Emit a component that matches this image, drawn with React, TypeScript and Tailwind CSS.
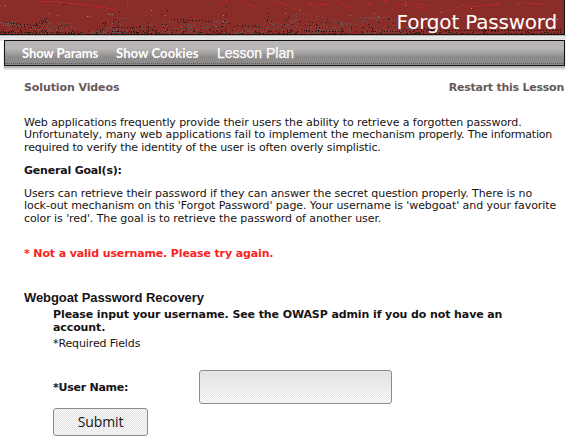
import React from 'react';

// Top edge of the cracked texture, as [x, y] points across the banner.
const ridge = [
  [0, 21], [30, 23], [46, 17], [52, 21], [70, 22], [80, 31], [96, 30], [106, 20], [118, 17], [122, 27], [145, 25],
  [149, 22], [158, 29], [164, 21], [190, 20], [214, 21], [226, 17], [236, 25], [260, 25], [268, 19], [284, 24],
  [292, 15], [304, 17], [330, 19], [350, 23], [362, 16], [376, 17], [390, 17], [402, 25], [440, 28], [565, 28],
];

function ridgeAt(x: number) {
  for (let i = 1; i < ridge.length; i += 1) {
    const [x1, y1] = ridge[i];
    const [x0, y0] = ridge[i - 1];
    if (x <= x1) return y0 + ((y1 - y0) * (x - x0)) / (x1 - x0);
  }
  return 29;
}

function noise(x: number, y: number) {
  const n = Math.sin(x * 12.9898 + y * 78.233) * 43758.5453;
  return n - Math.floor(n);
}

// Speckled pixels sit on every other column and row below the ridge.
let grayPath = '';
let darkPath = '';
for (let y = 14; y < 34; y += 1) {
  for (let x = y % 2; x < 565; x += 2) {
    const depth = y - ridgeAt(x);
    if (depth < 0) continue;
    const clump = Math.sin(x / 11 + y / 3) * 0.15;
    const n = noise(x, y);
    if (n < 0.2 + clump && x < 440) grayPath += `M${x} ${y}h1v1h-1z`;
    else if (n > 0.94 - (y > 29 ? 0.16 : 0) + clump * 0.4) darkPath += `M${x} ${y}h1v1h-1z`;
  }
}

// Points stepped along the longer cracks.
function trail(points: number[][]) {
  let d = '';
  for (let i = 1; i < points.length; i += 1) {
    const [ax, ay] = points[i - 1];
    const [bx, by] = points[i];
    const steps = Math.max(1, Math.round(Math.max(Math.abs(bx - ax), Math.abs(by - ay)) / 3));
    for (let s = 0; s < steps; s += 1) {
      d += `M${Math.round(ax + ((bx - ax) * s) / steps)} ${Math.round(ay + ((by - ay) * s) / steps)}h1v1h-1z`;
    }
  }
  return d;
}

const redTrails = [
  [[37, 1], [54, 1], [63, 2], [73, 3], [90, 5], [104, 7], [118, 10]],
  [[127, 1], [127, 9]], [[137, 1], [140, 6]], [[1, 6], [6, 6]],
  [[222, 3], [229, 1]], [[242, 2], [257, 7]], [[275, 1], [284, 4], [297, 9]],
  [[308, 3], [320, 7]], [[320, 4], [332, 4]], [[337, 1], [351, 9]], [[359, 1], [374, 5]],
  [[384, 1], [390, 1]], [[398, 4], [410, 4], [428, 10]], [[417, 3], [432, 6]],
  [[440, 11], [453, 9], [460, 5], [476, 6], [502, 3]], [[522, 2], [542, 4], [550, 5]],
].map(trail).join('');

const darkTrails = [
  [[3, 21], [14, 23], [33, 25], [47, 17]], [[58, 26], [70, 23]], [[100, 31], [107, 19]],
  [[112, 27], [142, 27]], [[112, 31], [140, 32]], [[148, 23], [148, 34]], [[174, 19], [214, 21]],
  [[226, 14], [221, 26], [214, 28]], [[242, 25], [262, 27]], [[268, 13], [266, 24]], [[288, 17], [280, 30]],
  [[306, 31], [344, 31]], [[384, 31], [398, 31]], [[428, 30], [558, 30]], [[3, 32], [80, 32]],
].map(trail).join('');

const grayTrails = [
  [[46, 18], [52, 12]], [[112, 22], [120, 18], [136, 19], [148, 14], [160, 19]], [[300, 14], [310, 14], [350, 24]],
  [[292, 18], [298, 10]], [[350, 23], [366, 13]], [[370, 17], [392, 17]], [[0, 22], [32, 26], [46, 20], [60, 32]],
  [[100, 33], [118, 18]], [[158, 34], [163, 22], [178, 22]], [[180, 32], [196, 23]], [[238, 33], [262, 22]],
].map(trail).join('');

const specks = [
  [5, 5], [49, 13], [57, 15], [87, 16], [89, 16], [108, 13], [110, 14], [112, 14], [151, 10], [299, 10], [223, 15],
  [223, 21], [285, 13], [350, 15], [374, 13], [378, 16], [405, 5], [405, 2], [441, 12], [471, 8], [518, 3], [557, 19], [165, 15],
];

function Banner() {
  return (
    <header className="relative h-[35px] w-[565px] overflow-hidden border-r border-b border-[#171313] bg-[#8a2d29]">
      <svg className="absolute inset-0" width="565" height="35" aria-hidden="true" shapeRendering="crispEdges">
        <path d={grayPath + grayTrails} fill="#665a59" />
        <path d={darkPath + darkTrails} fill="#171313" />
        <path d={redTrails} fill="#fb2222" />
        {specks.map(([x, y]) => <rect key={`${x}-${y}`} x={x} y={y} width="1" height="1" fill="#8e8c8b" />)}
        <path d="M63 4h1v1h-1zM65 4h1v1h-1zM119 12h1v1h-1zM167 10h1v1h-1zM161 14h1v1h-1zM226 6h1v1h-1z" fill="#171313" />
      </svg>
      <h1 className="relative whitespace-nowrap pt-[10px] pr-[7px] text-right text-[20px] leading-[25px] tracking-[-0.2px] text-white">Forgot Password</h1>
    </header>
  );
}

function Nav() {
  return (
    <div className="h-[36px] bg-[linear-gradient(#b8b6b5_0_1px,#e5e5e5_1px_6px,transparent_6px)] pt-[5px] pl-1">
      <nav className="relative flex h-[26px] w-[561px] items-center border border-[#171313] bg-[linear-gradient(#b8b6b5_0_32%,#8e8c8b_68%)] text-[13px] leading-[18px] text-white shadow-[0_2px_1px_#b8b6b5,0_4px_1px_#e5e5e5]">
        <span className="absolute inset-x-0 bottom-px border-b border-dotted border-[#665354]" />
        <a className="ml-[17px] w-[94px] whitespace-nowrap font-['Lato'] font-bold tracking-[-0.12px]">Show Params</a>
        <a className="w-[101px] whitespace-nowrap font-['Lato'] font-bold tracking-[0.1px]">Show Cookies</a>
        <a className="whitespace-nowrap font-['Liberation_Sans'] text-[14px] tracking-normal [-webkit-text-stroke:0.25px_white]">Lesson Plan</a>
      </nav>
    </div>
  );
}

export default function App() {
  return (
    <div className="h-[439px] w-[566px] overflow-hidden bg-white font-['DejaVu_Sans'] text-[11px] leading-[12.5px] tracking-[-0.077px] text-[#171313]">
      <Banner />
      <Nav />
      <main className="pl-6">
        <div className="flex justify-between pt-[11px] pr-[2px] font-bold text-[#665a59]">
          <a className="tracking-[-0.1px]">Solution Videos</a>
          <a className="tracking-[-0.24px]">Restart this Lesson</a>
        </div>
        <p className="mt-[22px] whitespace-nowrap">
          Web applications frequently provide their users the ability to retrieve a forgotten password.<br />
          Unfortunately, many web applications fail to implement the mechanism <span className="tracking-[-0.2px]">properly. The information</span><br />
          <span className="tracking-[-0.13px]">required to verify the identity of the user is often overly simplistic.</span>
        </p>
        <h2 className="mt-[11px] font-bold tracking-[-0.2px]">General Goal(s):</h2>
        <p className="mt-[10px] whitespace-nowrap">
          <span className="tracking-[-0.085px]">Users can retrieve their password if they can answer the secret question properly. There is no</span><br />
          lock-out mechanism on this 'Forgot Password' page. Your username is 'webgoat' and your favorite<br />
          color is 'red'. The goal is to retrieve the password of another user.
        </p>
        <p className="mt-[23px] font-bold tracking-[-0.13px] text-[#fb2222]">* Not a valid username. Please try again.</p>
        <h2 className="mt-[29px] font-['Liberation_Sans'] text-[13px] leading-[16px] font-bold">Webgoat Password Recovery</h2>
        <form className="pl-[29px]">
          <p className="mt-[2px] whitespace-nowrap leading-[13px] font-bold tracking-[-0.1px]">
            Please input your username. See the OWASP admin if you do not have an<br />account.
          </p>
          <p className="mt-[4px] tracking-[-0.11px]">*Required Fields</p>
          <div className="mt-[20px] flex h-[34px] items-center">
            <label className="w-[146px] pt-[2px] font-bold tracking-[-0.25px]">*User Name:</label>
            <input aria-label="User Name" className="h-[34px] w-[193px] rounded-[3px] border border-[#8e8c8b] bg-[linear-gradient(#e5e5e5_0_16%,transparent_80%),conic-gradient(#fff_25%,#e5e5e5_0_50%,#fff_0_75%,#e5e5e5_0)] bg-[length:100%_100%,2px_2px]" />
          </div>
          <button type="button" className="mt-1 block h-[28px] w-[95px] rounded-[3px] border border-[#8e8c8b] bg-[conic-gradient(#f8f8f8_25%,#e5e5e5_0_50%,#f8f8f8_0_75%,#e5e5e5_0)] bg-[length:2px_2px] font-['Open_Sans'] text-[14px] leading-[24px] tracking-[-0.1px]">Submit</button>
        </form>
      </main>
    </div>
  );
}
